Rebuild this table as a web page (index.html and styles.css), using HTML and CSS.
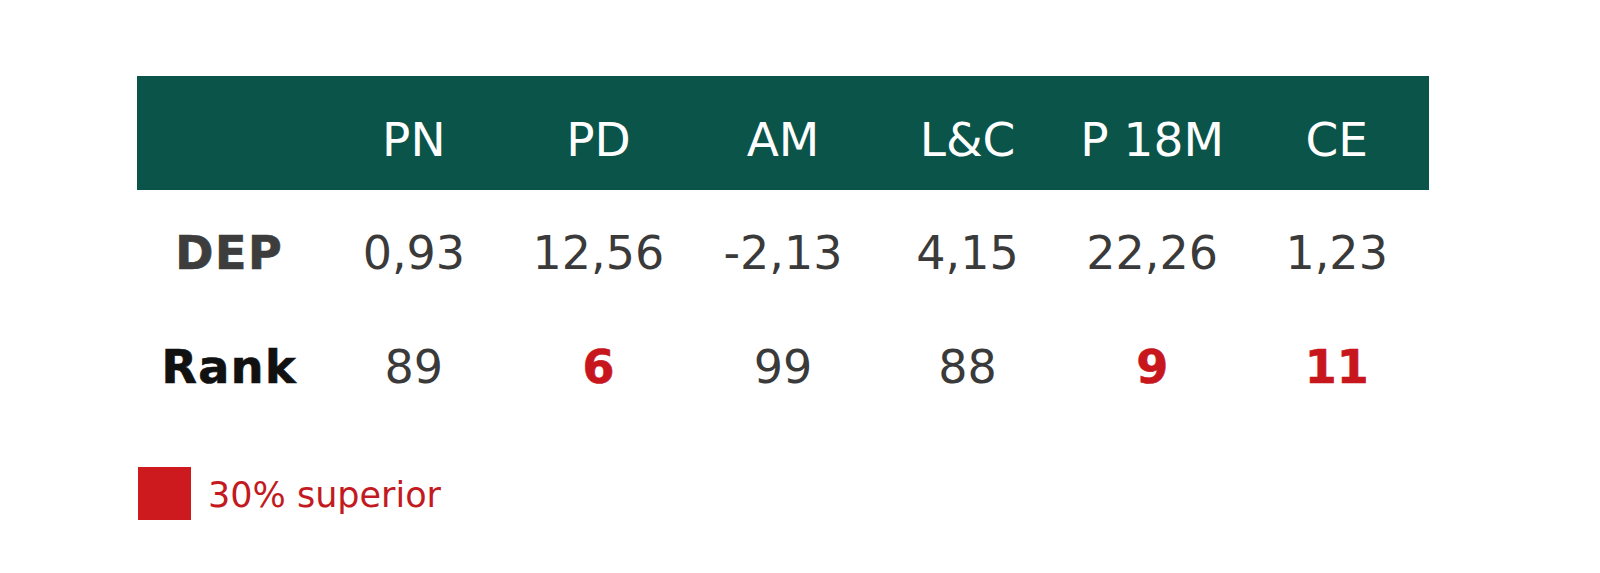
FILE: index.html
```html
<!DOCTYPE html>
<html lang="es">
<head>
<meta charset="utf-8">
<title>DEP</title>
<link rel="stylesheet" href="styles.css">
</head>
<body>
<div class="page">
  <div class="table">
    <div class="row head">
      <div class="cell"></div>
      <div class="cell">PN</div>
      <div class="cell">PD</div>
      <div class="cell">AM</div>
      <div class="cell">L&amp;C</div>
      <div class="cell">P 18M</div>
      <div class="cell">CE</div>
    </div>
    <div class="row data">
      <div class="cell label dep">DEP</div>
      <div class="cell">0,93</div>
      <div class="cell">12,56</div>
      <div class="cell">-2,13</div>
      <div class="cell">4,15</div>
      <div class="cell">22,26</div>
      <div class="cell">1,23</div>
    </div>
    <div class="row data">
      <div class="cell label rank">Rank</div>
      <div class="cell">89</div>
      <div class="cell hi">6</div>
      <div class="cell">99</div>
      <div class="cell">88</div>
      <div class="cell hi">9</div>
      <div class="cell hi">11</div>
    </div>
  </div>
  <div class="legend">
    <span class="swatch"></span>
    <span class="legend-text">30% superior</span>
  </div>
</div>
</body>
</html>
```

FILE: styles.css
```css
html, body {
  margin: 0;
  padding: 0;
  background: #ffffff;
}
body {
  font-family: "DejaVu Sans", "Open Sans", sans-serif;
  width: 1600px;
  height: 573px;
  overflow: hidden;
}
.page {
  padding: 76px 171px 0 137px;
}
.table {
  display: flex;
  flex-direction: column;
  width: 1292px;
}
.row {
  display: grid;
  grid-template-columns: repeat(7, 1fr);
  height: 114px;
  align-items: center;
}
.cell {
  text-align: center;
  padding-top: 12px;
  line-height: 1;
}
.head {
  background: #0a544a;
  color: #ffffff;
  font-size: 47px;
}
.data {
  color: #3a3a3a;
  font-size: 46px;
}
.label {
  font-weight: bold;
  letter-spacing: 1.5px;
  -webkit-text-stroke: 0.7px currentColor;
}
.dep {
  color: #3d3d3d;
}
.rank {
  color: #111111;
}
.hi {
  color: #c8161d;
  font-weight: bold;
  -webkit-text-stroke: 0.6px currentColor;
}
.legend {
  display: flex;
  align-items: center;
  gap: 17px;
  margin-top: 49px;
  margin-left: 1px;
}
.swatch {
  width: 53px;
  height: 53px;
  background: #cc1a1f;
}
.legend-text {
  color: #c21a20;
  font-size: 35px;
  padding-top: 2px;
}
```
